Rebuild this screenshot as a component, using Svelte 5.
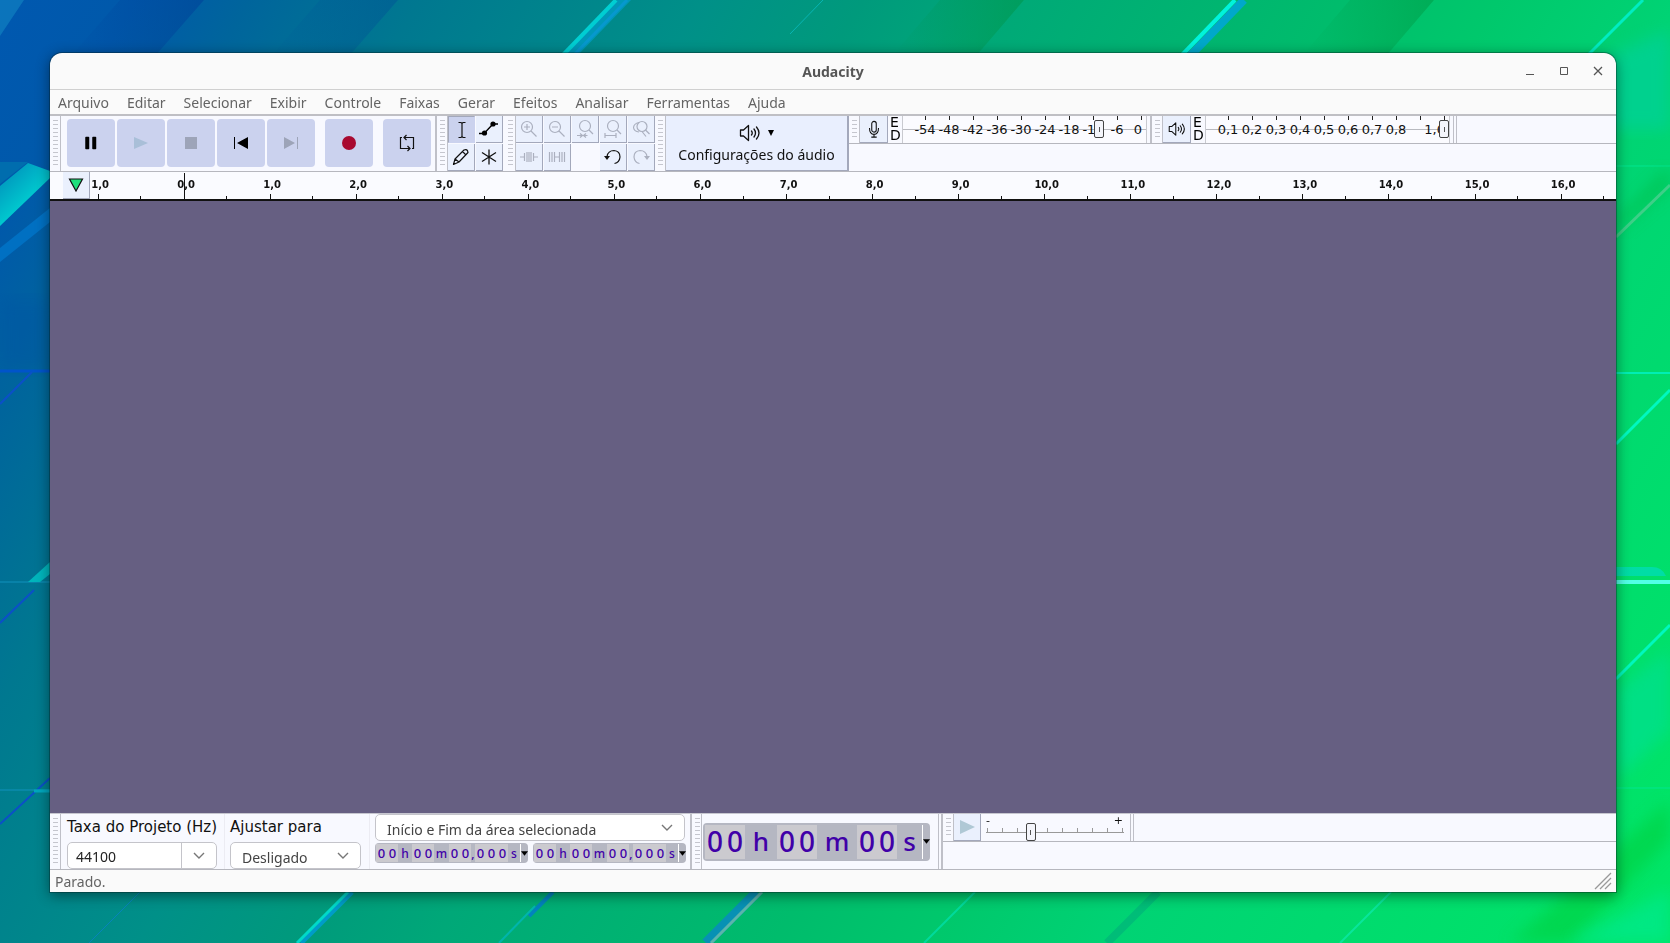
<script>
    const menus = ['Arquivo', 'Editar', 'Selecionar', 'Exibir', 'Controle', 'Faixas', 'Gerar', 'Efeitos', 'Analisar', 'Ferramentas', 'Ajuda'];

    const recordScale = ['-54', '-48', '-42', '-36', '-30', '-24', '-18', '-12', '-6', '0'];
    const playScale = ['0,1', '0,2', '0,3', '0,4', '0,5', '0,6', '0,7', '0,8', '', '1,0'];

    // Timeline: one cell per second, the window shows a bit less than 18 of them
    const visibleSeconds = 17.73;
    const seconds = ['1,0'];
    for (let i = 0; i <= 16; i++) {
        seconds.push(`${i},0`);
    }

    const shortTime = [
        { kind: 'digits', text: '00' },
        { kind: 'unit', text: 'h', width: 14 },
        { kind: 'digits', text: '00' },
        { kind: 'unit', text: 'm', width: 15 },
        { kind: 'digits', text: '00' },
        { kind: 'unit', text: ',', width: 4 },
        { kind: 'digits', text: '000' },
        { kind: 'unit', text: 's', width: 12 }
    ];
    const longTime = [
        { kind: 'digits', text: '00' },
        { kind: 'unit', text: 'h', width: 32 },
        { kind: 'digits', text: '00' },
        { kind: 'unit', text: 'm', width: 40 },
        { kind: 'digits', text: '00' },
        { kind: 'unit', text: 's', width: 25 }
    ];

    let recordLevel = 82;
    let playLevel = 100;
    let speed = 31;
    let rate = '44100';
    let tool = 'selection';
</script>

{#snippet timeDisplay(parts, label, big)}
    <div class="time" class:big role="group" aria-label={label}>
        {#each parts as part}
            {#if part.kind === 'digits'}
                <span class="digits">
                    {#each part.text.split('') as digit}<span class="digit">{digit}</span>{/each}
                </span>
            {:else}
                <span class="unit" style="width: {part.width}px">{part.text}</span>
            {/if}
        {/each}
        <button type="button" class="time-menu" aria-label="Formato de {label}">
            <svg width="8" height="5" viewBox="0 0 8 5"><path d="M0 0h8L4 5z" fill="#000" /></svg>
        </button>
    </div>
{/snippet}

{#snippet speaker(width)}
    <svg {width} height="18" viewBox="0 0 22 18" fill="none" stroke="#111" stroke-width="1.3" stroke-linecap="round" stroke-linejoin="round">
        <path d="M1.500 6h3l5-4.500v15l-5-4.500h-3z" />
        <path d="M12.500 7q1.500 2 0 4M15 5q3 4 0 8M17.500 3q5 6 0 12" />
    </svg>
{/snippet}

{#snippet chevron()}
    <svg class="chevron" width="12" height="8" viewBox="0 0 12 8" fill="none" stroke="#777" stroke-width="1.4"><path d="M1 1l5 5 5-5" /></svg>
{/snippet}

<div class="desktop">
    <svg class="wallpaper" viewBox="0 0 1670 943" preserveAspectRatio="none" aria-hidden="true">
        <defs>
            <linearGradient id="base" gradientUnits="userSpaceOnUse" x1="0" y1="0" x2="1670" y2="1000">
                <stop offset="0" stop-color="#0058b0" />
                <stop offset="0.06" stop-color="#0059aa" />
                <stop offset="0.11" stop-color="#00659c" />
                <stop offset="0.185" stop-color="#007890" />
                <stop offset="0.31" stop-color="#009088" />
                <stop offset="0.38" stop-color="#009a7c" />
                <stop offset="0.44" stop-color="#00a878" />
                <stop offset="0.59" stop-color="#00bc6c" />
                <stop offset="0.66" stop-color="#00c86c" />
                <stop offset="0.74" stop-color="#00d374" />
                <stop offset="1" stop-color="#00e865" />
            </linearGradient>
            <linearGradient id="fold">
                <stop offset="0" stop-color="#003c98" stop-opacity="0" />
                <stop offset="1" stop-color="#003c98" stop-opacity="0.5" />
            </linearGradient>
            <linearGradient id="leaf">
                <stop offset="0" stop-color="#008c38" stop-opacity="0" />
                <stop offset="1" stop-color="#008c38" stop-opacity="0.4" />
            </linearGradient>
            <linearGradient id="cyan" x1="0" y1="0" x2="0.6" y2="0.8">
                <stop offset="0" stop-color="#0087b8" />
                <stop offset="1" stop-color="#00d8d4" />
            </linearGradient>
            <filter id="soft"><feGaussianBlur stdDeviation="8" /></filter>
        </defs>
        <rect width="1670" height="943" fill="url(#base)" />

        <!-- folds along the top edge -->
        <path d="M0 0h24L0 36z" fill="#168fc8" opacity="0.5" />
        <path d="M120 0h84L148 64H64z" fill="url(#fold)" />
        <path d="M320 0h78L342 64h-78z" fill="url(#fold)" opacity="0.6" />
        <path d="M940 0h84l-48 56h-84z" fill="url(#leaf)" />
        <path d="M1350 0h84l-48 56h-84z" fill="url(#leaf)" />
        <path d="M631 0l-54 56h-14L617 0z" fill="#0098b8" />
        <path d="M616 0l-54 56" stroke="#00ced2" stroke-width="4" />
        <path d="M627 0l-54 56" stroke="#0798ce" stroke-width="3" />
        <path d="M823 0l-33 34" stroke="#09b5b4" stroke-width="1" />
        <path d="M1244 0l-54 56" stroke="#00a8ca" stroke-width="8" />
        <path d="M1235 0l-54 56" stroke="#00f3dc" stroke-width="4" />
        <path d="M1643 0l-56 56" stroke="#00edc2" stroke-width="3" />
        <path d="M1600 60l70-30v100h-60z" fill="#00d0a0" opacity="0.6" filter="url(#soft)" />

        <!-- left edge -->
        <path d="M0 162h28L0 184z" fill="#006dae" />
        <path d="M28 163l22 8v7L0 226v-40z" fill="url(#cyan)" />
        <path d="M0 248l50-40v14L0 262z" fill="#0075c9" opacity="0.8" />
        <path d="M0 300h50v70H0z" fill="#0052a4" opacity="0.4" filter="url(#soft)" />
        <path d="M0 371h50" stroke="#0054ca" stroke-width="3" />
        <path d="M0 404l32-32M0 623l34-33M0 824l50-46" stroke="#0b50c8" stroke-width="2" />
        <path d="M0 582h50M0 790h50" stroke="#1192bd" stroke-width="1" />
        <path d="M28 582l22-20v12l-10 8z" fill="#00b5bc" />
        <path d="M34 791h16" stroke="#00a7bd" stroke-width="3" />

        <!-- right edge -->
        <path d="M1616 166h54M1616 788h54" stroke="#00e690" stroke-width="1" />
        <path d="M1616 220l54-54v20l-54 46z" fill="#00b945" opacity="0.6" filter="url(#soft)" />
        <path d="M1616 237l54-52" stroke="#3dcf88" stroke-width="3" />
        <path d="M1616 373h54" stroke="#00eeb5" stroke-width="2" />
        <path d="M1616 444l54-54M1616 679l54-54" stroke="#00f8c0" stroke-width="3" />
        <path d="M1616 567h36q10 0 14 9h-50z" fill="#00dcb4" opacity="0.8" />
        <path d="M1616 582h54" stroke="#52ffe6" stroke-width="4" />
        <path d="M1616 690l54-40v80l-54 50z" fill="#00e090" opacity="0.7" filter="url(#soft)" />
        <path d="M1670 800v40l-100 103h-60z" fill="#00d040" opacity="0.6" filter="url(#soft)" />
        <path d="M1670 890v53h-100z" fill="#00e98a" opacity="0.8" filter="url(#soft)" />

        <!-- bottom edge -->
        <path d="M140 892l-51 51" stroke="#0784bc" stroke-width="1" />
        <path d="M352 892l-51 51" stroke="#009cc8" stroke-width="5" />
        <path d="M348 892l-51 51" stroke="#00d9c8" stroke-width="3" />
        <path d="M553 892l-24 24" stroke="#0284bd" stroke-width="4" />
        <path d="M535 906l-36 37" stroke="#00b5ac" stroke-width="2" />
        <path d="M757 892l-51 51" stroke="#0791b4" stroke-width="10" />
        <path d="M762 892l-51 51" stroke="#5bb5ac" stroke-width="3" />
        <path d="M975 892l-51 51" stroke="#00da9c" stroke-width="2" />
        <path d="M1158 892l-51 51" stroke="#00b07b" stroke-width="8" opacity="0.6" />
        <path d="M1391 892l-51 51" stroke="#09e69c" stroke-width="2" />
    </svg>

    <main class="window">
        <header class="titlebar">
            <span></span>
            <h1>Audacity</h1>
            <div class="window-buttons">
                <button type="button" aria-label="Minimizar">
                    <svg width="10" height="10" viewBox="0 0 10 10"><path d="M1 8.500h8" stroke="#555" /></svg>
                </button>
                <button type="button" aria-label="Maximizar">
                    <svg width="10" height="10" viewBox="0 0 10 10"><path d="M1.500 1.500h7v7h-7z" fill="none" stroke="#555" /></svg>
                </button>
                <button type="button" aria-label="Fechar">
                    <svg width="10" height="10" viewBox="0 0 10 10"><path d="M1 1l8 8M9 1l-8 8" stroke="#555" stroke-width="1.300" /></svg>
                </button>
            </div>
        </header>

        <nav class="menubar">
            {#each menus as menu}
                <button type="button">{menu}</button>
            {/each}
        </nav>

        <section class="toolbar">
            <span class="grip"></span>
            <div class="transport">
                <button type="button" aria-label="Pausar">
                    <svg width="16" height="16" viewBox="0 0 16 16"><path d="M3 2.500h2.500v11H3zM10 2.500h2.500v11H10z" fill="#000" stroke="#000" stroke-width="1.500" stroke-linejoin="round" /></svg>
                </button>
                <button type="button" aria-label="Reproduzir">
                    <svg width="16" height="16" viewBox="0 0 16 16"><path d="M1 2l14 6-14 6z" fill="#a9bfd8" /></svg>
                </button>
                <button type="button" aria-label="Parar">
                    <svg width="16" height="16" viewBox="0 0 16 16"><path d="M2 2h12v12H2z" fill="#9da4b8" /></svg>
                </button>
                <button type="button" aria-label="Ir para o início">
                    <svg width="16" height="16" viewBox="0 0 16 16"><path d="M1 2h1v12H1zM15 2v12L4 8z" fill="#000" /></svg>
                </button>
                <button type="button" aria-label="Ir para o fim">
                    <svg width="16" height="16" viewBox="0 0 16 16"><path d="M14 2h1v12h-1zM1 2v12l11-6z" fill="#9da4b8" /></svg>
                </button>
                <button type="button" class="spaced" aria-label="Gravar">
                    <svg width="16" height="16" viewBox="0 0 16 16"><circle cx="8" cy="8" r="7" fill="#a80a30" /></svg>
                </button>
                <button type="button" class="spaced" aria-label="Repetir">
                    <svg width="18" height="18" viewBox="0 0 18 18" fill="none" stroke="#111" stroke-width="1.200">
                        <path d="M4 3.500H2.500v11H11.500M6 3.500h9.500v11H14" />
                        <path d="M8.500 1L6 3.500 8.500 6M9.500 12l2.500 2.500L9.500 17" />
                    </svg>
                </button>
            </div>

            <span class="grip edge"></span>
            <div class="tools two">
                <button type="button" class:pressed={tool === 'selection'} aria-label="Seleção" on:click={() => tool = 'selection'}>
                    <svg width="20" height="20" viewBox="0 0 20 20" fill="none" stroke="#111" stroke-width="1.200"><path d="M10 2.500v15M6.500 2.500h2.500l1 1 1-1h2.500M6.500 17.500h2.500l1-1 1 1h2.500" /></svg>
                </button>
                <button type="button" class:pressed={tool === 'envelope'} aria-label="Envelope" on:click={() => tool = 'envelope'}>
                    <svg width="20" height="20" viewBox="0 0 20 20"><path d="M0 14.500h5L14 5h5" fill="none" stroke="#000" stroke-width="1.300" /><circle cx="5.500" cy="14" r="2.600" /><circle cx="14" cy="5" r="2.600" /></svg>
                </button>
                <button type="button" class:pressed={tool === 'draw'} aria-label="Desenhar" on:click={() => tool = 'draw'}>
                    <svg width="20" height="20" viewBox="0 0 20 20" fill="none" stroke="#111" stroke-width="1.200" stroke-linejoin="round"><path d="M2.500 17.500L4 12 13 3q3.500-1.500 4 2.500L8 15zM11.500 4.500L15 8M4 12l4 3" /></svg>
                </button>
                <button type="button" class:pressed={tool === 'multi'} aria-label="Multiferramenta" on:click={() => tool = 'multi'}>
                    <svg width="20" height="20" viewBox="0 0 20 20" fill="none" stroke="#111" stroke-width="1.300"><path d="M10 2.500v15M3 5.500l14 9M17 5.500l-14 9" /></svg>
                </button>
            </div>

            <span class="grip"></span>
            <div class="tools five">
                <button type="button" aria-label="Ampliar">
                    <svg width="20" height="20" viewBox="0 0 20 20"><circle cx="8" cy="8" r="5.500" /><path d="M12 12l5.500 5.500M5 8h6M8 5v6" /></svg>
                </button>
                <button type="button" aria-label="Reduzir">
                    <svg width="20" height="20" viewBox="0 0 20 20"><circle cx="8" cy="8" r="5.500" /><path d="M12 12l5.500 5.500M5 8h6" /></svg>
                </button>
                <button type="button" aria-label="Ajustar seleção à largura">
                    <svg width="20" height="20" viewBox="0 0 20 20"><circle cx="10" cy="7" r="5.500" /><path d="M14 11l4 4M2 16.500h5.500M12.500 16.500H8M5 14.500l2.500 2-2.500 2M11 14.500l-2.500 2 2.500 2" /></svg>
                </button>
                <button type="button" aria-label="Ajustar projeto à largura">
                    <svg width="20" height="20" viewBox="0 0 20 20"><circle cx="10" cy="7" r="5.500" /><path d="M14 11l4 4M2 16.500h11M2 14v5M13 14v5" /></svg>
                </button>
                <button type="button" aria-label="Alternar zoom">
                    <svg width="20" height="20" viewBox="0 0 20 20"><circle cx="11" cy="7.500" r="5" /><path d="M8 3.500q-5 1-5.500 5 .5 4 5.500 4.500M14.500 11l4 4M11 12.500l4 5" /></svg>
                </button>
                <button type="button" aria-label="Aparar áudio">
                    <svg width="20" height="20" viewBox="0 0 20 20"><path d="M1 10h4M15 10h4M5.500 6v8M8 5v10M10 5v10M12 5v10M14.500 6v8" /></svg>
                </button>
                <button type="button" aria-label="Silenciar seleção">
                    <svg width="20" height="20" viewBox="0 0 20 20"><path d="M2.500 5v10M5 5v10M7.500 5v10M7.500 10h5M12.500 5v10M15 5v10M17.500 5v10" /></svg>
                </button>
                <span class="blank"></span>
                <button type="button" class="enabled" aria-label="Desfazer">
                    <svg width="20" height="20" viewBox="0 0 20 20"><path d="M4 9.500q1-6 7-6 6 .5 6 6.500-.5 5.500-5.500 6.500" /><path d="M1 9h6l-3 4z" fill="#111" stroke="none" /></svg>
                </button>
                <button type="button" aria-label="Refazer">
                    <svg width="20" height="20" viewBox="0 0 20 20"><path d="M16 9.500q-1-6-7-6-6 .5-6 6.500.5 5.500 5.500 6.500" /><path d="M19 9h-6l3 4z" fill="#abb0bf" stroke="none" /></svg>
                </button>
            </div>

            <span class="grip"></span>
            <button type="button" class="audio-setup">
                <span class="audio-icon">
                    {@render speaker(22)}
                    <svg width="6" height="6" viewBox="0 0 6 6"><path d="M0 0h6L3 6z" fill="#000" /></svg>
                </span>
                <span>Configurações do áudio</span>
            </button>

            <div class="meters">
                <div class="meter-row">
                    <span class="grip"></span>
                    <div class="meter">
                        <button type="button" aria-label="Medidor de gravação">
                            <svg width="14" height="18" viewBox="0 0 14 20" fill="none" stroke="#111" stroke-width="1.200"><rect x="4.500" y="1.500" width="5" height="12" rx="2.500" /><path d="M2 9q0 7 5 7t5-7M7 16v3M4 19h6" /></svg>
                        </button>
                        <span class="channels"><span>E</span><span>D</span></span>
                        <div class="scale">
                            {#each recordScale as mark}<span class="mark">{mark}</span>{/each}
                            <input type="range" min="0" max="100" bind:value={recordLevel} aria-label="Volume de gravação" />
                        </div>
                    </div>
                    <span class="grip edge"></span>
                    <div class="meter">
                        <button type="button" aria-label="Medidor de reprodução">{@render speaker(18)}</button>
                        <span class="channels"><span>E</span><span>D</span></span>
                        <div class="scale">
                            {#each playScale as mark}<span class="mark">{mark}</span>{/each}
                            <input type="range" min="0" max="100" bind:value={playLevel} aria-label="Volume de reprodução" />
                        </div>
                    </div>
                    <span class="row-end"></span>
                </div>
            </div>
        </section>

        <section class="ruler">
            <button type="button" class="pin" aria-label="Fixar agulha">
                <svg width="16" height="14" viewBox="0 0 16 14"><path d="M1.500 1h13L8 13z" fill="#1fe07c" stroke="#111" stroke-width="1.200" /></svg>
            </button>
            <div class="seconds">
                {#each seconds as second, i}
                    <span class="second" class:origin={i === 1} style="width: {100 / visibleSeconds}%">{second}</span>
                {/each}
            </div>
        </section>

        <div class="tracks"></div>

        <section class="toolbar bottom">
            <span class="grip"></span>
            <div class="field rate">
                <label for="rate">Taxa do Projeto (Hz)</label>
                <div class="combo">
                    <input id="rate" type="text" bind:value={rate} />
                    <button type="button" aria-label="Escolher taxa">{@render chevron()}</button>
                </div>
            </div>
            <div class="field snap">
                <label for="snap">Ajustar para</label>
                <div class="select">
                    <select id="snap"><option>Desligado</option></select>
                    {@render chevron()}
                </div>
            </div>
            <div class="selection">
                <div class="select">
                    <select aria-label="Tipo de seleção"><option>Início e Fim da área selecionada</option></select>
                    {@render chevron()}
                </div>
                <div class="times">
                    {@render timeDisplay(shortTime, 'início da seleção', false)}
                    {@render timeDisplay(shortTime, 'fim da seleção', false)}
                </div>
            </div>

            <span class="grip edge"></span>
            <div class="position">
                {@render timeDisplay(longTime, 'posição do áudio', true)}
            </div>

            <div class="meters speed-area">
                <div class="meter-row">
                    <span class="grip"></span>
                    <button type="button" class="play-speed" aria-label="Reproduzir na velocidade">
                        <svg width="18" height="18" viewBox="0 0 18 18"><path d="M2 2l15 7-15 7z" fill="#afc8d5" /></svg>
                    </button>
                    <div class="speed">
                        <span class="signs"><span>-</span><span>+</span></span>
                        <input type="range" min="0" max="100" bind:value={speed} aria-label="Velocidade de reprodução" />
                    </div>
                    <span class="row-end"></span>
                </div>
            </div>
        </section>

        <footer class="status">
            <span>Parado.</span>
            <svg width="18" height="18" viewBox="0 0 18 18" stroke="#999" stroke-width="1.300"><path d="M1 17L17 1M6 17L17 6M11 17l6-6" /></svg>
        </footer>
    </main>
</div>

<style>
    :global(body) {
        margin: 0;
    }

    .desktop {
        position: relative;
        display: flex;
        box-sizing: border-box;
        min-height: 100vh;
        padding: 53px 54px 51px 50px;
        overflow: hidden;
        background: #009b7c;
        font-family: 'Noto Sans', 'DejaVu Sans', sans-serif;
        font-size: 14px;
    }

    .wallpaper {
        position: absolute;
        inset: 0;
        width: 100%;
        height: 100%;
    }

    button {
        display: flex;
        align-items: center;
        justify-content: center;
        box-sizing: border-box;
        margin: 0;
        padding: 0;
        border: 0;
        background: none;
        color: inherit;
        font: inherit;
    }

    .window {
        position: relative;
        display: flex;
        flex: 1;
        flex-direction: column;
        min-width: 0;
        overflow: hidden;
        border-radius: 12px 12px 0 0;
        background: #fafafa;
        box-shadow: 0 0 0 1px rgba(0, 30, 30, 0.35);
        filter: drop-shadow(0 3px 7px rgba(0, 0, 0, 0.45));
    }

    .titlebar {
        display: grid;
        grid-template-columns: 1fr auto 1fr;
        align-items: center;
        height: 36px;
        border-bottom: 1px solid #d0d0d0;
    }

    h1 {
        margin: 0;
        color: #555;
        font-size: 14px;
        font-weight: 700;
    }

    .window-buttons {
        display: flex;
        justify-content: flex-end;
        gap: 24px;
        padding-right: 13px;
    }

    .menubar {
        display: flex;
        gap: 18px;
        height: 24px;
        padding: 0 8px;
        border-bottom: 2px solid #bfbfc4;
        color: #646464;
    }

    .toolbar {
        display: flex;
        height: 55px;
        border-bottom: 1px solid #b6b7be;
        background: #f8f9ff;
    }

    .grip {
        flex: none;
        box-sizing: border-box;
        width: 11px;
        border-right: 1px solid #bfc0c8;
        background: repeating-linear-gradient(#c5c6ce 0 1px, transparent 1px 4px) 3px 4px / 5px calc(100% - 8px) no-repeat;
    }

    .grip.edge {
        width: 13px;
        border-left: 2px solid #bfc0c8;
    }

    .transport {
        display: flex;
        align-items: center;
        gap: 2px;
        padding: 0 4px 2px 6px;
    }

    .transport button {
        width: 48px;
        height: 48px;
        border-radius: 4px;
        background: #cbd2ee;
    }

    .transport .spaced {
        margin-left: 8px;
    }

    .tools {
        display: grid;
        grid-auto-rows: 27px;
        gap: 1px;
        align-content: start;
    }

    .tools.two {
        grid-template-columns: repeat(2, 27px);
        padding-right: 2px;
    }

    .tools.five {
        grid-template-columns: repeat(5, 27px);
    }

    .tools button,
    .meter button,
    .play-speed,
    .pin {
        width: 27px;
        height: 27px;
        border-right: 1px solid #a3a8bb;
        border-bottom: 1px solid #a3a8bb;
        background: #eaf0fd;
    }

    .tools .pressed {
        border: 1px solid #a3a8bb;
        border-right-color: #cbd2ee;
        border-bottom-color: #cbd2ee;
        background: #cbd2ee;
    }

    .five svg {
        fill: none;
        stroke: #abb0bf;
        stroke-width: 1.2;
    }

    .five .enabled svg {
        stroke: #111;
    }

    .audio-setup {
        flex-direction: column;
        gap: 4px;
        width: 183px;
        padding-top: 2px;
        border-right: 2px solid #a3a8bb;
        border-bottom: 1px solid #a3a8bb;
        background: #e9effe;
        color: #111;
        line-height: 18px;
    }

    .audio-icon {
        display: flex;
        align-items: center;
        gap: 7px;
    }

    .meters {
        flex: 1;
        min-width: 0;
    }

    .meter-row {
        display: flex;
        height: 27px;
        border-bottom: 1px solid #b6b7be;
    }

    .meter {
        display: flex;
        flex: none;
        box-sizing: border-box;
        width: 290px;
        padding-right: 3px;
    }

    .meter > button {
        flex: none;
        width: 28px;
    }

    .channels {
        display: flex;
        flex: none;
        flex-direction: column;
        box-sizing: border-box;
        width: 14px;
        padding-left: 2px;
        font: 14px/13px 'DejaVu Sans', sans-serif;
    }

    .scale {
        position: relative;
        display: flex;
        flex: 1;
        box-sizing: border-box;
        min-width: 0;
        padding-left: 10px;
        border-right: 1px solid #c9cad0;
        border-left: 1px solid #c9cad0;
        background: linear-gradient(#b9bac0, #b9bac0) 0 13px / 100% 1px no-repeat, #fbfbff;
    }

    .mark {
        display: flex;
        flex: none;
        justify-content: center;
        width: 24px;
        padding-top: 6px;
        background: linear-gradient(#222, #222) center top / 1px 4px no-repeat;
        font: 13px/16px 'DejaVu Sans', sans-serif;
        color: #111;
        box-sizing: border-box;
    }

    /* the top of the scale ends on its tick */
    .mark:nth-last-of-type(1) {
        justify-content: flex-end;
        width: 13px;
        background-position: right top;
    }

    input[type='range'] {
        margin: 0;
        appearance: none;
        background: none;
    }

    input[type='range']::-webkit-slider-thumb {
        width: 10px;
        height: 18px;
        border: 1px solid #444;
        border-radius: 2px;
        appearance: none;
        background: linear-gradient(#555, #555) center / 1px 5px no-repeat, #f4f5fb;
    }

    .scale input {
        position: absolute;
        top: 3px;
        left: 0;
        width: 100%;
        height: 20px;
    }

    .row-end {
        width: 2px;
        border-right: 1px solid #bfc0c8;
        border-left: 1px solid #bfc0c8;
    }

    .ruler {
        display: flex;
        height: 27px;
        padding-left: 13px;
        border-bottom: 2px solid #111;
        background: #fafbff;
    }

    .pin {
        flex: none;
    }

    .seconds {
        display: flex;
        flex: 1;
        min-width: 0;
        overflow: hidden;
    }

    .second {
        flex: none;
        box-sizing: border-box;
        padding: 5px 0 0 4px;
        background:
            linear-gradient(#111, #111) center bottom / 1px 5px no-repeat,
            linear-gradient(#111, #111) right bottom / 1px 3px no-repeat;
        color: #111;
        font: bold 10px/16px 'DejaVu Sans', sans-serif;
        text-align: center;
    }

    .second:first-child {
        margin-left: -35px;
    }

    .second.origin {
        background:
            linear-gradient(#111, #111) center bottom / 1px 26px no-repeat,
            linear-gradient(#111, #111) right bottom / 1px 3px no-repeat;
    }

    .tracks {
        flex: 1;
        background: #665f82;
    }

    .bottom {
        border-top: 1px solid #c6c6cf;
    }

    .field {
        display: flex;
        flex-direction: column;
        justify-content: space-between;
        box-sizing: border-box;
        padding-top: 3px;
        border-right: 1px solid #ececf3;
    }

    .field label {
        color: #111;
        font: 15px/20px 'DejaVu Sans', sans-serif;
        white-space: nowrap;
    }

    .rate {
        width: 164px;
        padding-right: 7px;
        padding-left: 6px;
    }

    .snap {
        width: 145px;
        padding-right: 8px;
        padding-left: 5px;
    }

    .combo,
    .select {
        position: relative;
        display: flex;
        box-sizing: border-box;
        height: 27px;
        border: 1px solid #c4c4ca;
        border-radius: 5px;
        background: #fff;
    }

    .combo input {
        flex: 1;
        min-width: 0;
        padding: 1px 8px 0;
        border: 0;
        background: none;
        color: #222;
        font: inherit;
    }

    .combo button {
        width: 35px;
        border-left: 1px solid #c4c4ca;
    }

    select {
        width: 100%;
        padding: 4px 11px 0;
        border: 0;
        appearance: none;
        background: none;
        color: #444;
        font: inherit;
    }

    .select .chevron {
        position: absolute;
        top: 9px;
        right: 11px;
        pointer-events: none;
    }

    .selection {
        display: flex;
        flex-direction: column;
        gap: 2px;
        box-sizing: border-box;
        width: 320px;
        padding: 0 5px;
    }

    .times {
        display: flex;
        gap: 5px;
    }

    .time {
        display: flex;
        box-sizing: border-box;
        height: 20px;
        padding: 1px 0 1px 1px;
        border-radius: 4px;
        background: #b5b7c2;
        color: #4000a8;
        font: 500 13px/19px 'Noto Sans', 'DejaVu Sans', sans-serif;
    }

    .digits {
        display: flex;
        background: #cbcacf;
    }

    .digit {
        width: 11px;
        text-align: center;
    }

    .unit {
        font-size: 12px;
        text-align: center;
    }

    .time-menu {
        width: 8px;
        margin-left: auto;
        border-left: 1px solid #fff;
    }

    .bottom > .grip.edge {
        width: 12px;
    }

    .position {
        display: flex;
        align-items: center;
        box-sizing: border-box;
        width: 237px;
        padding: 0 8px 0 1px;
        border-right: 1px solid #bfc0c8;
    }

    .time.big {
        width: 227px;
        height: 38px;
        padding: 2px 0 2px 2px;
        font-size: 28px;
        line-height: 33px;
    }

    .big .digit {
        width: 20px;
    }

    .big .unit {
        font-size: 26px;
    }

    .speed-area {
        margin-left: 2px;
        border-left: 2px solid #bfc0c8;
    }

    .play-speed {
        flex: none;
    }

    .speed {
        display: flex;
        flex-direction: column;
        position: relative;
        width: 139px;
        padding: 0 5px;
        background: linear-gradient(#999, #999) 5px 18px / 138px 1px no-repeat;
    }

    .speed::after {
        content: '';
        height: 5px;
        margin: 0 1px;
        background: repeating-linear-gradient(90deg, #999 0 1px, transparent 1px 15px);
    }

    .signs {
        display: flex;
        justify-content: space-between;
        height: 14px;
        padding-right: 2px;
        color: #111;
        font: 11px/14px 'DejaVu Sans', sans-serif;
    }

    .speed input {
        position: absolute;
        top: 8px;
        left: 5px;
        width: 138px;
        height: 20px;
    }

    .status {
        display: flex;
        align-items: center;
        justify-content: space-between;
        height: 22px;
        padding: 0 4px 0 5px;
        color: #646464;
    }
</style>
